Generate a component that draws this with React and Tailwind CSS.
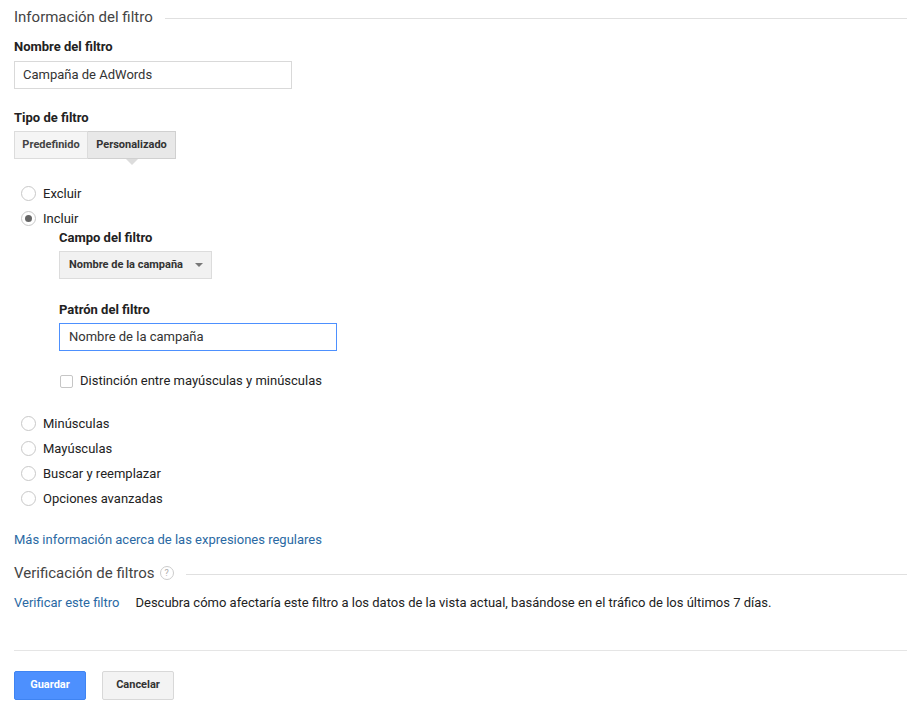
import React from "react";

const Radio = ({ label, checked = false }) => (
  <div className="flex items-center h-[25px]">
    <span className="w-[15px] h-[15px] rounded-full border border-[#c8c8c8] bg-white flex items-center justify-center ml-[7px]">
      {checked && <span className="w-[7px] h-[7px] rounded-full bg-[#666]" />}
    </span>
    <span className="ml-[7px] text-[13px] text-[#222]">{label}</span>
  </div>
);

const SectionTitle = ({ children, help = false }) => (
  <div className="flex items-center h-[20px]">
    <span className="text-[15px] text-[#444]">{children}</span>
    {help && (
      <span className="ml-[5px] w-[14px] h-[14px] rounded-full border border-[#ccc] text-[9px] text-[#aaa] flex items-center justify-center leading-none">
        ?
      </span>
    )}
    <span className="flex-1 h-px bg-[#e0e0e0] ml-[12px] mt-[3px]" />
  </div>
);

const Label = ({ children }) => (
  <div className="text-[13px] font-bold text-[#222] leading-[16px]">{children}</div>
);

export default function App() {
  return (
    <div
      className="w-[907px] h-[722px] bg-white pl-[14px] pt-[7px] overflow-hidden"
      style={{ fontFamily: "Roboto, 'Noto Sans', Arial, sans-serif" }}
    >
      <SectionTitle>Información del filtro</SectionTitle>

      <div className="mt-[12px]">
        <Label>Nombre del filtro</Label>
        <div className="mt-[6px] w-[278px] h-[28px] border border-[#d9d9d9] flex items-center px-[8px] text-[13px] text-[#333]">
          Campaña de AdWords
        </div>
      </div>

      <div className="mt-[21px]">
        <Label>Tipo de filtro</Label>
        <div className="mt-[5px] flex">
          <div className="h-[28px] w-[74px] border border-[#dcdcdc] bg-[#f5f5f5] flex items-center justify-center text-[11px] font-bold text-[#444]">
            Predefinido
          </div>
          <div className="relative h-[28px] w-[88px] border border-l-0 border-[#d0d0d0] bg-[#e8e8e8] flex items-center justify-center text-[11px] font-bold text-[#333]">
            Personalizado
            <span className="absolute left-1/2 -translate-x-1/2 top-[27px] w-0 h-0 border-l-[6px] border-r-[6px] border-t-[6px] border-l-transparent border-r-transparent border-t-[#dcdcdc]" />
          </div>
        </div>
      </div>

      <div className="mt-[22px]">
        <Radio label="Excluir" />
        <Radio label="Incluir" checked />
      </div>

      <div className="ml-[45px] -mt-[1px]">
        <Label>Campo del filtro</Label>
        <div className="mt-[5px] w-[153px] h-[28px] border border-[#dcdcdc] bg-[#f1f1f1] flex items-center pl-[9px] pr-[8px] text-[11px] font-bold text-[#333]">
          <span className="flex-1">Nombre de la campaña</span>
          <span className="w-0 h-0 border-l-[4px] border-r-[4px] border-t-[4px] border-l-transparent border-r-transparent border-t-[#777]" />
        </div>

        <div className="mt-[23px]">
          <Label>Patrón del filtro</Label>
          <div className="mt-[5px] w-[278px] h-[28px] border border-[#4d90fe] flex items-center px-[9px] text-[13px] text-[#333]">
            Nombre de la campaña
          </div>
        </div>

        <div className="mt-[21px] flex items-center h-[18px]">
          <span className="w-[13px] h-[13px] border border-[#c6c6c6] rounded-[2px] bg-white ml-[1px]" />
          <span className="ml-[7px] text-[13px] text-[#222]">Distinción entre mayúsculas y minúsculas</span>
        </div>
      </div>

      <div className="mt-[21px]">
        <Radio label="Minúsculas" />
        <Radio label="Mayúsculas" />
        <Radio label="Buscar y reemplazar" />
        <Radio label="Opciones avanzadas" />
      </div>

      <div className="mt-[20px] text-[13px] text-[#2a69a3] leading-[18px]">
        Más información acerca de las expresiones regulares
      </div>

      <div className="mt-[14px]">
        <SectionTitle help>Verificación de filtros</SectionTitle>
      </div>

      <div className="mt-[11px] flex text-[13px] leading-[18px]">
        <span className="text-[#2a69a3]">Verificar este filtro</span>
        <span className="ml-[16px] text-[#222]">
          Descubra cómo afectaría este filtro a los datos de la vista actual, basándose en el tráfico de los últimos 7 días.
        </span>
      </div>

      <div className="mt-[38px] h-px bg-[#e5e5e5]" />

      <div className="mt-[20px] flex gap-[16px]">
        <button className="h-[29px] w-[72px] rounded-[2px] bg-[#4d90fe] border border-[#3f84f2] text-white text-[11px] font-bold">
          Guardar
        </button>
        <button className="h-[29px] w-[72px] rounded-[2px] bg-[#f3f3f3] border border-[#d8d8d8] text-[#333] text-[11px] font-bold">
          Cancelar
        </button>
      </div>
    </div>
  );
}
